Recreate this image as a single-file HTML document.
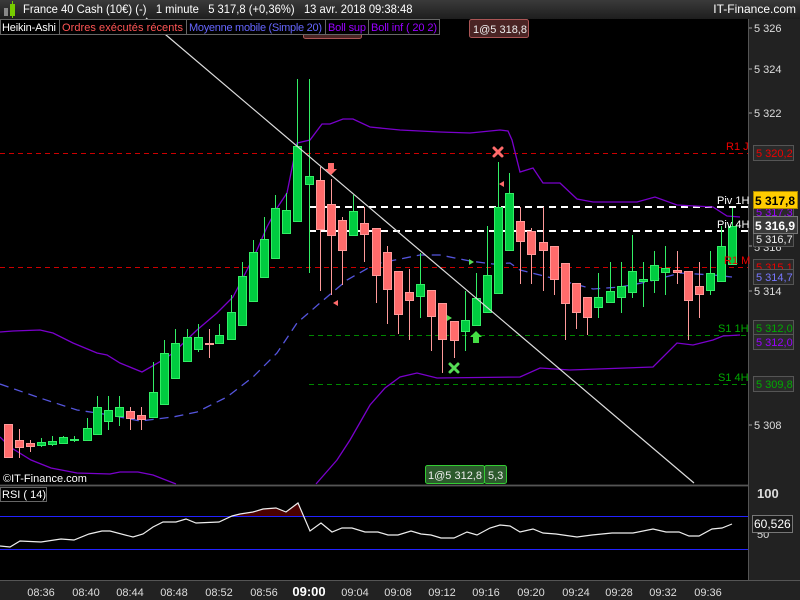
<!DOCTYPE html>
<html><head><meta charset="utf-8"><style>
*{margin:0;padding:0;box-sizing:border-box}
body{width:800px;height:600px;background:#222;overflow:hidden;font-family:"Liberation Sans",sans-serif;position:relative}
.hdr{position:absolute;left:0;top:0;width:800px;height:19px;background:linear-gradient(#3a3a3a,#1e1e1e);color:#fff;font-size:12px;line-height:19px}
.hdr span{display:inline-block;transform-origin:0 50%}
svg{position:absolute;left:0;top:0}
text{font-family:"Liberation Sans",sans-serif}
</style></head><body>
<div class="hdr"><span style="position:absolute;left:23px;transform:scaleX(0.935)">France 40 Cash (10€) (-)&nbsp;&nbsp;&nbsp;1 minute&nbsp;&nbsp;&nbsp;5 317,8 (+0,36%)&nbsp;&nbsp;&nbsp;13 avr. 2018 09:38:48</span><span style="position:absolute;right:4px">IT-Finance.com</span></div>
<svg width="800" height="600" id="s" style="top:0">
<rect x="0" y="19" width="748" height="465" fill="#000"/>
<rect x="0" y="487" width="748" height="93" fill="#000"/>
<line x1="748.5" y1="19" x2="748.5" y2="580" stroke="#555"/>
<line x1="0" y1="485.5" x2="748" y2="485.5" stroke="#555"/>
<line x1="0" y1="580.5" x2="800" y2="580.5" stroke="#555"/>
<rect x="4" y="8" width="4" height="8" fill="#888"/><rect x="10" y="4" width="5" height="12" fill="#7c0"/><line x1="12.5" y1="1" x2="12.5" y2="18" stroke="#7c0"/>
<g stroke-dasharray="5,4" stroke-width="1">
<line x1="0" y1="153.5" x2="748" y2="153.5" stroke="#c00"/>
<line x1="0" y1="267.5" x2="748" y2="267.5" stroke="#c00"/>
<line x1="309" y1="335.5" x2="748" y2="335.5" stroke="#080"/>
<line x1="309" y1="384.5" x2="748" y2="384.5" stroke="#080"/>
</g>
<g stroke="#fff" stroke-width="2" stroke-dasharray="7,5">
<line x1="309" y1="207" x2="748" y2="207"/>
<line x1="309" y1="231" x2="748" y2="231"/>
</g>
<g fill="none" stroke="#7a00cc" stroke-width="1.3">
<polyline points="0,332 13,331 40,330 53,333 73,343 97,353 107,355 120,363 142,372 163,360 173,353 197,330 217,313 233,297 247,270 257,250 267,227 277,208 287,193 297,143 310,140 322,124 330,124 343,119 353,119 370,127 400,130 440,132 470,133 500,130 508,131 512,140 520,172 533,168 543,183 560,183 577,199 593,202 637,202 655,197 677,205 713,207 727,216 740,217"/>
<polyline points="0,437 10,447 31,460 51,468 77,473 110,474 120,472 138,472 153,475 176,484"/>
<polyline points="316,484 337,460 350,440 370,405 385,388 400,377 417,373 437,378 520,377 540,368 570,370 653,367 677,343 693,345 713,340 723,336 740,335"/>
</g>
<polyline fill="none" stroke="#5555dd" stroke-width="1.3" stroke-dasharray="9,6" points="0,384 40,398 77,410 110,415 140,421 173,417 197,412 227,397 253,377 277,353 297,323 320,303 347,280 370,267 380,263 420,255 440,255 470,261 493,264 510,263 520,270 540,275 567,282 593,289 620,287 647,282 680,273 713,275 732,277"/>
<g id="c"></g>
<line x1="146" y1="18" x2="694" y2="483" stroke="#ddd" stroke-width="1.2"/>
<path d="M328,163h6v6h3l-6,6l-6,-6h3z" fill="#ff6b6b"/>
<path d="M473,343h6v-6h3l-6,-6l-6,6h3z" fill="#4d4"/>
<g stroke-width="3" stroke-linecap="round"><path d="M494,148l8,8M502,148l-8,8" stroke="#ff6b6b"/><path d="M450,364l8,8M458,364l-8,8" stroke="#5d5"/></g>
<path d="M333,303l5,-3v6z" fill="#ff6b6b"/><path d="M499,184l5,-3v6z" fill="#ff6b6b"/>
<path d="M452,318l-5,-3v6z" fill="#5d5"/><path d="M474,262l-5,-3v6z" fill="#5d5"/>
<g font-size="11">
<text x="726" y="150" fill="#e00">R1 J</text>
<text x="717" y="204" fill="#fff">Piv 1H</text>
<text x="717" y="228" fill="#fff">Piv 4H</text>
<text x="724" y="264" fill="#e00">R1 M</text>
<text x="718" y="332" fill="#0a0">S1 1H</text>
<text x="718" y="381" fill="#0a0">S1 4H</text>
</g>
<g font-size="11">
<rect x="303.5" y="30.5" width="58" height="8" rx="2" fill="#4a2424" stroke="#a55"/>
<rect x="0.5" y="19.5" width="439" height="15" fill="#000" stroke="#666"/>
<line x1="59.5" y1="20" x2="59.5" y2="34" stroke="#666"/><line x1="186.5" y1="20" x2="186.5" y2="34" stroke="#666"/><line x1="325.5" y1="20" x2="325.5" y2="34" stroke="#666"/><line x1="368.5" y1="20" x2="368.5" y2="34" stroke="#666"/>
<text x="2" y="31" fill="#fff" textLength="54">Heikin-Ashi</text>
<text x="62" y="31" fill="#f55" textLength="121">Ordres exécutés récents</text>
<text x="189" y="31" fill="#66f" textLength="133">Moyenne mobile (Simple 20)</text>
<text x="328" y="31" fill="#90f" textLength="38">Boll sup</text>
<text x="371" y="31" fill="#90f" textLength="66">Boll inf ( 20 2)</text>
<rect x="469.5" y="19.5" width="59" height="18" rx="2" fill="#4a2424" stroke="#a55"/>
<text x="473" y="33" fill="#eee">1@5 318,8</text>
<rect x="425.5" y="465.5" width="59" height="18" rx="2" fill="#2c5a2c" stroke="#3c3"/>
<rect x="484.5" y="465.5" width="22" height="18" rx="2" fill="#2c5a2c" stroke="#3c3"/>
<text x="428" y="479" fill="#eee">1@5 312,8</text><text x="488" y="479" fill="#eee">5,3</text>
<text x="3" y="482" fill="#fff">©IT-Finance.com</text>
</g>
<g font-size="11" fill="#ddd">
<g stroke="#999"><line x1="749" y1="28" x2="752" y2="28"/><line x1="749" y1="69" x2="752" y2="69"/><line x1="749" y1="113" x2="752" y2="113"/><line x1="749" y1="291" x2="752" y2="291"/><line x1="749" y1="425" x2="752" y2="425"/><line x1="749" y1="246" x2="752" y2="246"/></g>
<text x="754" y="32">5 326</text><text x="754" y="73">5 324</text><text x="754" y="117">5 322</text><text x="754" y="295">5 314</text><text x="754" y="429">5 308</text><text x="754" y="251">5 316</text>
<rect x="753.5" y="145.5" width="40" height="15" fill="#2a2a2a" stroke="#555"/><text x="756" y="157" fill="#e00">5 320,2</text>
<rect x="753.5" y="204.5" width="40" height="15" fill="#2a2a2a" stroke="#555"/><text x="756" y="216" fill="#90f">5 317,3</text>
<rect x="753.5" y="231.5" width="40" height="15" fill="#2a2a2a" stroke="#555"/><text x="756" y="243" fill="#eee">5 316,7</text>
<rect x="753.5" y="259.5" width="40" height="15" fill="#2a2a2a" stroke="#555"/><text x="756" y="271" fill="#e00">5 315,1</text>
<rect x="753.5" y="269.5" width="40" height="15" fill="#2a2a2a" stroke="#555"/><text x="756" y="281" fill="#77f">5 314,7</text>
<rect x="753.5" y="320.5" width="40" height="15" fill="#2a2a2a" stroke="#555"/><text x="756" y="332" fill="#0a0">5 312,0</text>
<rect x="753.5" y="334.5" width="40" height="15" fill="#2a2a2a" stroke="#555"/><text x="756" y="346" fill="#90f">5 312,0</text>
<rect x="753.5" y="376.5" width="40" height="15" fill="#2a2a2a" stroke="#555"/><text x="756" y="388" fill="#0a0">5 309,8</text>
<rect x="753.5" y="191.5" width="44" height="17" fill="#fc0" stroke="#aa8800"/><text x="755" y="205" fill="#000" font-weight="bold" font-size="12">5 317,8</text>
<rect x="753.5" y="216.5" width="44" height="17" fill="#3a3a3a" stroke="#777"/><text x="755" y="230" fill="#fff" font-weight="bold" font-size="12">5 316,9</text>
</g>
<rect x="0.5" y="487.5" width="46" height="14" fill="#000" stroke="#666"/>
<text x="2" y="498" font-size="11" fill="#fff">RSI ( 14)</text>
<path fill="#4a0000" d="M232,516 L240,514 253,512 263,509 276,508 286,512 298,503 303,516Z"/>
<line x1="0" y1="516.5" x2="748" y2="516.5" stroke="#22f"/>
<line x1="0" y1="549.5" x2="748" y2="549.5" stroke="#22f"/>
<polyline fill="none" stroke="#eee" stroke-width="1.2" points="0,546 10,547 20,541 41,542 61,539 74,540 89,534 102,531 110,531 133,537 143,534 153,527 163,522 176,522 186,519 196,523 219,522 232,516 240,514 253,512 263,509 276,508 286,512 298,503 310,531 321,523 332,532 342,528 352,528 365,532 378,532 388,535 398,535 411,531 421,534 431,535 441,538 454,538 467,532 477,535 490,528 500,525 510,526 520,532 533,529 543,533 556,534 577,537 592,535 612,533 633,533 653,529 666,532 679,532 689,536 699,536 712,529 722,528 732,524"/>
<g font-size="11" fill="#ddd">
<text x="757" y="498" font-weight="bold" font-size="13">100</text>
<text x="757" y="538">50</text>
<rect x="752.5" y="515.5" width="40" height="17" fill="#1a1a1a" stroke="#777"/><text x="754" y="528" fill="#fff" font-size="12">60,526</text>
</g>
<g font-size="11" fill="#ddd" text-anchor="middle">
<text x="41" y="596">08:36</text><text x="86" y="596">08:40</text><text x="130" y="596">08:44</text><text x="174" y="596">08:48</text><text x="219" y="596">08:52</text><text x="264" y="596">08:56</text><text x="309" y="596" font-weight="bold" font-size="13" fill="#fff">09:00</text><text x="355" y="596">09:04</text><text x="398" y="596">09:08</text><text x="442" y="596">09:12</text><text x="486" y="596">09:16</text><text x="531" y="596">09:20</text><text x="576" y="596">09:24</text><text x="619" y="596">09:28</text><text x="663" y="596">09:32</text><text x="708" y="596">09:36</text>
</g>
</svg>
<script>
var d=[[8,424,457,424,457,0],[19,440,447,429,458,0],[30,443,446,440,452,0],[41,445,442,438,447,1],[52,444,441,436,446,1],[63,443,437,436,443,1],[74,440,439,436,442,1],[87,440,428,418,441,1],[97,434,407,396,434,1],[108,421,410,396,430,1],[119,416,407,396,426,1],[130,411,418,407,430,0],[141,415,419,407,430,0],[153,417,392,362,418,1],[164,404,353,340,404,1],[175,378,343,329,378,1],[187,361,337,329,361,1],[198,349,337,324,352,1],[209,343,344,329,358,0],[219,343,335,324,343,1],[231,339,312,295,339,1],[242,325,276,262,325,1],[253,301,252,240,301,1],[264,277,239,217,277,1],[275,258,208,195,258,1],[286,233,210,193,233,1],[297,221,146,79,221,1],[309,184,176,79,273,1],[320,180,229,167,291,0],[331,204,235,179,295,0],[342,220,250,217,285,0],[353,235,211,195,235,1],[364,223,234,207,262,0],[376,228,275,228,303,0],[387,252,289,246,324,0],[398,271,314,271,334,0],[409,292,300,269,340,0],[420,296,284,253,318,1],[431,290,316,290,351,0],[442,303,339,303,373,0],[454,321,340,321,358,0],[465,331,320,291,351,1],[476,325,298,273,325,1],[487,312,275,226,312,1],[498,293,207,162,293,1],[509,250,193,173,250,1],[520,221,241,207,284,0],[531,231,254,228,284,0],[543,242,250,207,291,0],[554,246,279,246,295,0],[565,263,303,263,340,0],[576,283,312,283,329,0],[587,297,317,297,335,0],[598,307,297,273,318,1],[610,302,291,262,302,1],[621,297,286,262,313,1],[632,292,271,235,298,1],[643,281,279,262,307,1],[654,280,265,251,293,1],[665,272,268,246,295,1],[677,270,272,251,284,0],[688,271,300,271,340,0],[699,286,294,262,318,0],[710,290,273,251,295,1],[721,281,246,226,281,1],[732,264,226,208,264,1]];
var h='';d.forEach(function(c){var x=c[0],t=Math.min(c[1],c[2]),b=Math.max(c[1],c[2]),g=c[5];var st=g?'#33ee66':'#ff9a9a',f=g?'#00cc40':'#ff6b6b';
h+='<line x1="'+(x+.5)+'" y1="'+c[3]+'" x2="'+(x+.5)+'" y2="'+c[4]+'" stroke="'+st+'"/>';
h+='<rect x="'+(x-3.5)+'" y="'+(t+.5)+'" width="8" height="'+Math.max(b-t,1)+'" fill="'+f+'" stroke="'+st+'"/>';});
document.getElementById('c').innerHTML=h;
</script>
</body></html>
